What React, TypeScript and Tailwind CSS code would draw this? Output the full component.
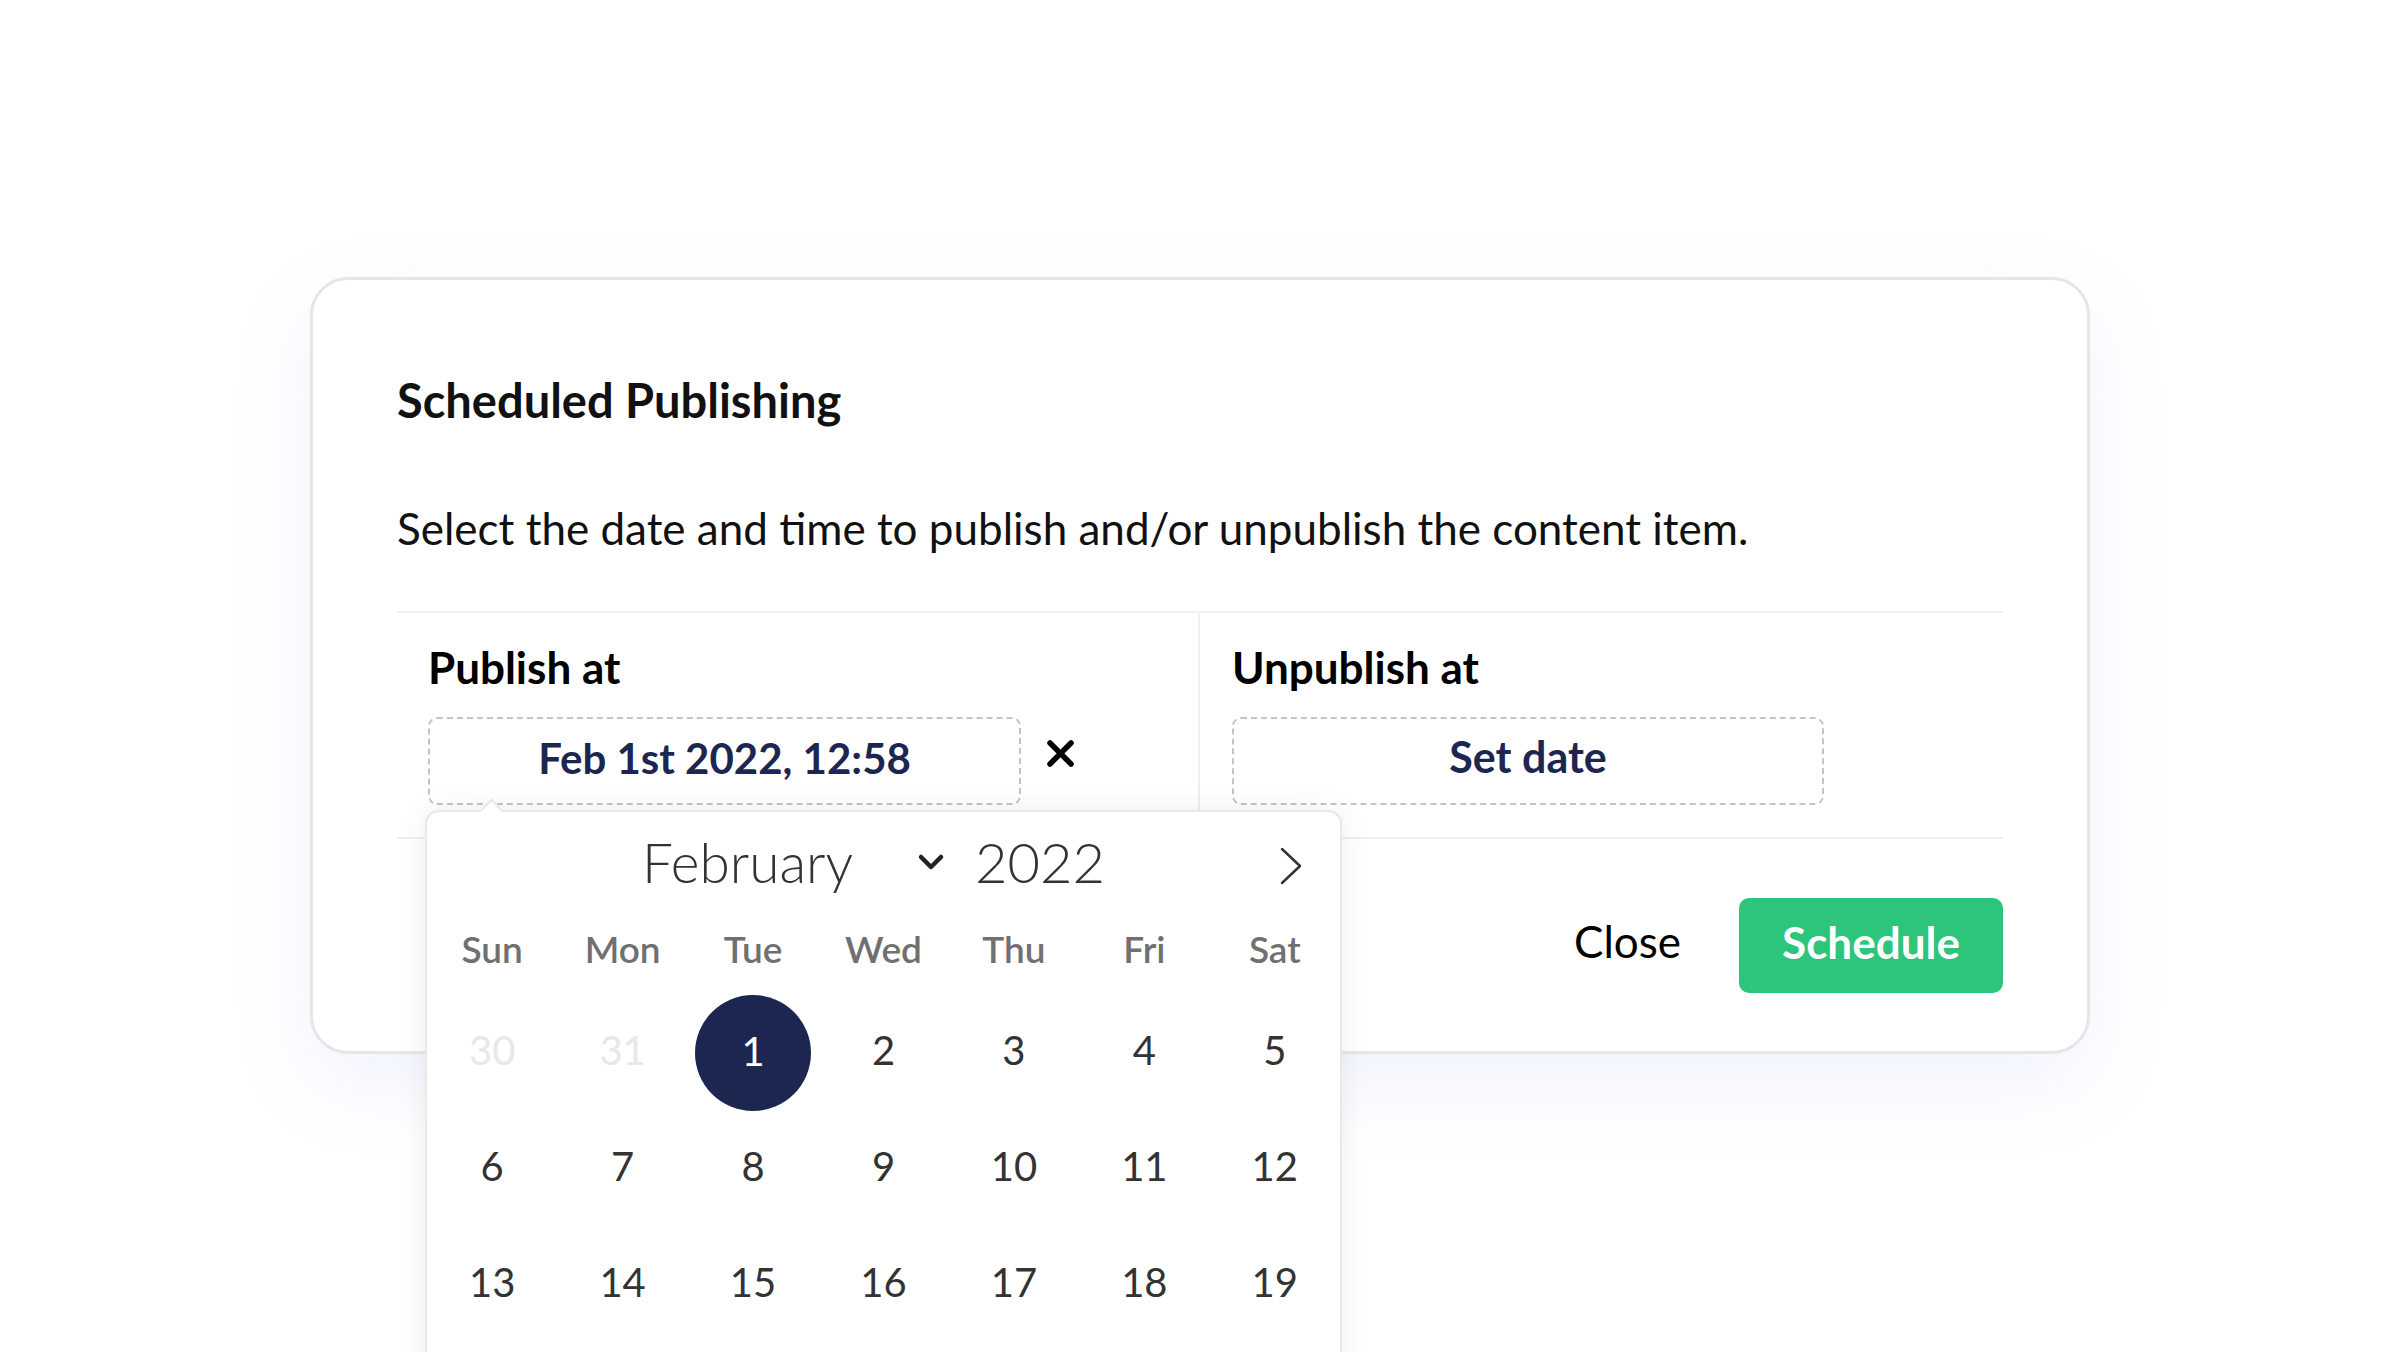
import React from 'react';

const weekdays = ['Sun', 'Mon', 'Tue', 'Wed', 'Thu', 'Fri', 'Sat'];

type Day = { n: number; muted?: boolean; selected?: boolean };

const weeks: Day[][] = [
  [{ n: 30, muted: true }, { n: 31, muted: true }, { n: 1, selected: true }, { n: 2 }, { n: 3 }, { n: 4 }, { n: 5 }],
  [{ n: 6 }, { n: 7 }, { n: 8 }, { n: 9 }, { n: 10 }, { n: 11 }, { n: 12 }],
  [{ n: 13 }, { n: 14 }, { n: 15 }, { n: 16 }, { n: 17 }, { n: 18 }, { n: 19 }],
  [{ n: 20 }, { n: 21 }, { n: 22 }, { n: 23 }, { n: 24 }, { n: 25 }, { n: 26 }],
  [{ n: 27 }, { n: 28 }, { n: 1, muted: true }, { n: 2, muted: true }, { n: 3, muted: true }, { n: 4, muted: true }, { n: 5, muted: true }],
];

function DatePicker() {
  return (
    <div className="absolute left-[-3px] top-[calc(100%+5px)] z-10 w-[917px] rounded-[14px] border-2 border-[#e8e8e8] bg-white shadow-[0_0_30px_rgba(0,0,0,0.07)]">
      {/* pointer */}
      <div className="absolute left-[56px] top-[-10px] h-[17px] w-[17px] rotate-45 border-l-2 border-t-2 border-[#e8e8e8] bg-white" />

      <div className="flex h-[100px] items-center pl-[215px] pr-[38px] text-[#333]">
        <span className="text-[55px] font-light leading-none">February</span>
        <svg className="ml-[64px]" width="28" height="18" viewBox="0 0 28 18" fill="none">
          <polyline points="4,4 14,14 24,4" stroke="#222" strokeWidth="4.5" strokeLinecap="round" strokeLinejoin="round" />
        </svg>
        <span className="ml-[30px] text-[56px] font-light leading-none">2022</span>
        <div className="flex-1" />
        <svg className="mt-[7px]" width="22" height="38" viewBox="0 0 22 38" fill="none">
          <polyline points="2,2 20,19 2,36" stroke="#333" strokeWidth="2.5" strokeLinecap="round" strokeLinejoin="round" />
        </svg>
      </div>

      <div className="grid h-[74px] grid-cols-7 items-center">
        {weekdays.map((d) => (
          <div key={d} className="text-center text-[37px] font-semibold text-[#707070]">{d}</div>
        ))}
      </div>

      <div className="pt-[9px] pb-[20px]">
        {weeks.map((week, i) => (
          <div key={i} className="grid h-[116px] grid-cols-7">
            {week.map((day, j) =>
              day.selected ? (
                <div key={j} className="flex items-center justify-center">
                  <div className="flex h-[116px] w-[116px] items-center justify-center rounded-full bg-[#1c2650] pb-[4px] text-[40px] text-white">
                    {day.n}
                  </div>
                </div>
              ) : (
                <div key={j} className="flex items-center justify-center pb-[6px]">
                  <span className={`text-[40px] ${day.muted ? 'text-[#e8e8e8]' : 'text-[#333]'}`}>{day.n}</span>
                </div>
              )
            )}
          </div>
        ))}
      </div>
    </div>
  );
}

function ClearIcon() {
  return (
    <svg className="mt-[22px]" width="29" height="29" viewBox="0 0 29 29" fill="none">
      <line x1="4" y1="4" x2="25" y2="25" stroke="#000" strokeWidth="5.5" strokeLinecap="round" />
      <line x1="25" y1="4" x2="4" y2="25" stroke="#000" strokeWidth="5.5" strokeLinecap="round" />
    </svg>
  );
}

export default function App() {
  return (
    <div className="h-screen overflow-hidden bg-white font-[Lato,'Noto_Sans',sans-serif] text-black">
      <div className="flex justify-center pt-[277px]">
        <div className="relative w-[1780px] rounded-[38px] border-[3px] border-[#e6e6e6] bg-white px-[84px] pt-[94px] pb-[58px] shadow-[0_30px_80px_rgba(130,160,230,0.13)]">
          <h2 className="text-[47px] font-bold leading-[52px] text-[#111]">Scheduled Publishing</h2>
          <p className="mt-[76px] text-[44px] leading-[52px] text-[#111]">
            Select the date and time to publish and/or unpublish the content item.
          </p>

          <div className="mt-[57px] grid grid-cols-2 border-y-2 border-[#f0f0f0]">
            <div className="border-r-2 border-[#f0f0f0] pl-[31px] pt-[28px] pb-[32px]">
              <div className="text-[44px] font-bold leading-[52px]">Publish at</div>
              <div className="mt-[24px] flex items-start gap-[25px]">
                <div className="relative">
                  <button className="flex h-[88px] w-[593px] items-center justify-center rounded-[9px] border-2 border-dashed border-[#c4c4c8] pb-[6px] text-[42px] font-bold text-[#1c2650]">
                    Feb 1st 2022, 12:58
                  </button>
                  <DatePicker />
                </div>
                <ClearIcon />
              </div>
            </div>
            <div className="pl-[32px] pt-[28px] pb-[32px]">
              <div className="text-[44px] font-bold leading-[52px]">Unpublish at</div>
              <button className="mt-[24px] flex h-[88px] w-[592px] items-center justify-center rounded-[9px] border-2 border-dashed border-[#c4c4c8] pb-[7px] text-[43px] font-bold text-[#1c2650]">
                Set date
              </button>
            </div>
          </div>

          <div className="mt-[59px] flex items-center justify-end">
            <button className="mr-[58px] pb-[9px] text-[44px] text-black">Close</button>
            <button className="h-[95px] w-[264px] rounded-[10px] bg-[#2dc47c] pb-[8px] text-[44px] font-bold text-white">Schedule</button>
          </div>
        </div>
      </div>
    </div>
  );
}
